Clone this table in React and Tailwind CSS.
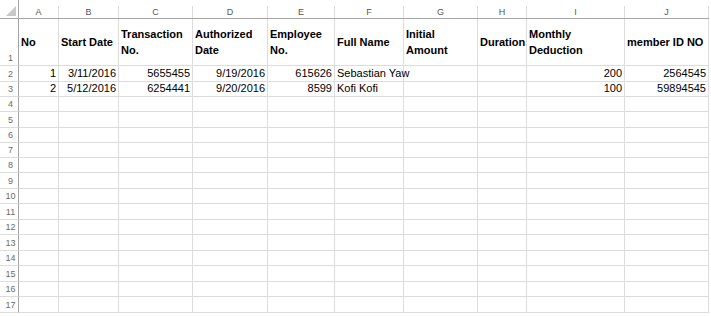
import React from "react";

const GRID =
  "grid grid-cols-[19px_40px_60px_74px_75px_67px_69px_74px_49px_98px_84px]";
const LETTERS = ["A", "B", "C", "D", "E", "F", "G", "H", "I", "J"];
const HEIGHTS = [
  "h-[16px]", "h-[15px]", "h-[15px]", "h-[16px]", "h-[15px]", "h-[15px]",
  "h-[15px]", "h-[16px]", "h-[15px]", "h-[16px]", "h-[15px]", "h-[16px]",
  "h-[15px]", "h-[16px]", "h-[15px]", "h-[16px]",
];

const HEAD = [
  ["No"],
  ["Start Date"],
  ["Transaction", "No."],
  ["Authorized", "Date"],
  ["Employee", "No."],
  ["Full Name"],
  ["Initial", "Amount"],
  ["Duration"],
  ["Monthly", "Deduction"],
  ["member ID NO"],
];

const DATA = {
  2: ["1", "3/11/2016", "5655455", "9/19/2016", "615626", "Sebastian Yaw", "", "", "200", "2564545"],
  3: ["2", "5/12/2016", "6254441", "9/20/2016", "8599", "Kofi Kofi", "", "", "100", "59894545"],
};
const LEFT = [false, false, false, false, false, true, true, true, false, false];

function RowNum({ n }) {
  return (
    <div className="flex items-end justify-center pl-[3px] pb-[1px] border-r border-r-[#a6a6a6] border-b border-b-[#dcdcdc] text-[9px] leading-[11px] text-[#6b6b6b]">
      {n}
    </div>
  );
}

export default function App() {
  return (
    <div className="w-[711px] h-[316px] bg-white overflow-hidden font-['Liberation_Sans',Arial,sans-serif] text-black">
      {/* column header */}
      <div className={`${GRID} h-[19px]`}>
        <div className="flex items-end justify-end pr-[2px] pb-[2px] border-r border-r-[#a6a6a6] border-b border-b-[#a6a6a6]">
          <svg width="10" height="10" viewBox="0 0 10 10">
            <polygon points="10,0 10,10 0,10" fill="#c8c8c8" />
          </svg>
        </div>
        {LETTERS.map((l) => (
          <div key={l} className="flex flex-col border-b border-b-[#a6a6a6]">
            <div className="h-[6px]" />
            <div className="flex-1 flex items-center justify-center border-r border-r-[#dcdcdc] text-[9px] leading-[11px] text-[#555]">
              {l}
            </div>
          </div>
        ))}
      </div>

      {/* row 1 */}
      <div className={`${GRID} h-[47px]`}>
        <RowNum n={1} />
        {HEAD.map((lines, i) => (
          <div
            key={i}
            className="flex flex-col justify-center px-[2px] border-r border-b border-[#dcdcdc] font-bold text-[11px] leading-[16px] whitespace-nowrap"
          >
            {lines.map((t) => (
              <span key={t}>{t}</span>
            ))}
          </div>
        ))}
      </div>

      {/* rows 2..17 */}
      {HEIGHTS.map((h, idx) => {
        const r = idx + 2;
        const vals = DATA[r] || ["", "", "", "", "", "", "", "", "", ""];
        return (
          <div key={r} className={`${GRID} ${h}`}>
            <RowNum n={r} />
            {vals.map((v, i) => (
              <div
                key={i}
                className={`flex items-end pb-[1px] px-[2px] border-r border-b border-[#dcdcdc] text-[11px] leading-[13px] whitespace-nowrap ${
                  LEFT[i] ? "justify-start" : "justify-end"
                }`}
              >
                {v}
              </div>
            ))}
          </div>
        );
      })}
    </div>
  );
}
